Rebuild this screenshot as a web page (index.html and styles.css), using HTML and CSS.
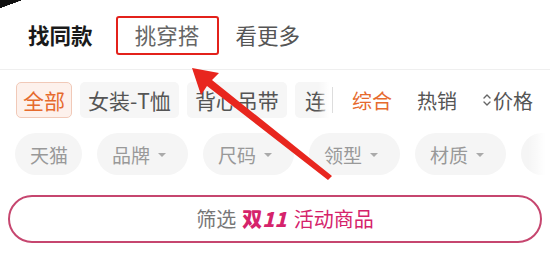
FILE: index.html
```html
<!DOCTYPE html>
<html lang="zh">
<head>
<meta charset="utf-8">
<link rel="stylesheet" href="styles.css">
</head>
<body>
<div class="page">
  <div class="corner"></div>
  <nav class="tabs">
    <span class="tab tab-active">找同款</span>
    <span class="tab tab-boxed">挑穿搭</span>
    <span class="tab">看更多</span>
  </nav>
  <div class="cats">
    <div class="cat-scroll">
      <span class="chip chip-on">全部</span>
      <span class="chip">女装-T恤</span>
      <span class="chip">背心吊带</span>
      <span class="chip chip-cut">连</span>
      <span class="fade"></span>
    </div>
    <span class="vdiv"></span>
    <div class="sorts">
      <span class="sort sort-on">综合</span>
      <span class="sort">热销</span>
      <span class="sort"><svg class="updown" viewBox="0 0 10 18" width="10" height="18"><path d="M2 7 L5 4 L8 7 M2 11 L5 14 L8 11" fill="none" stroke="#666" stroke-width="1.4" stroke-linecap="round" stroke-linejoin="round"/></svg>价格</span>
    </div>
  </div>
  <div class="filters">
    <span class="pill pill-plain">天猫</span>
    <span class="pill">品牌<i class="caret"></i></span>
    <span class="pill">尺码<i class="caret"></i></span>
    <span class="pill">领型<i class="caret"></i></span>
    <span class="pill">材质<i class="caret"></i></span>
    <span class="pill pill-empty"></span>
    <span class="fade fade-r"></span>
  </div>
  <div class="promo">
    <div class="promo-btn"><span class="gray">筛选</span><b class="d11">双<i>11</i></b><span class="hot">活动商品</span></div>
  </div>
  <svg class="arrow" width="550" height="262" viewBox="0 0 550 262">
    <polygon points="192,68 219,73 212,80 332,176 328,180 207,86 201,95" fill="#e8261e"/>
  </svg>
</div>
</body>
</html>
```
FILE: styles.css
```css
* { box-sizing: border-box; }
html, body { margin: 0; padding: 0; background: #fff; }
body {
  width: 550px; height: 262px; overflow: hidden;
  font-family: "Noto Sans CJK SC", "Noto Sans", sans-serif;
}
.page { position: relative; width: 550px; height: 262px; }
.corner {
  position: absolute; left: 0; top: 0; width: 22px; height: 10px;
  background: linear-gradient(160deg, #111 0 45%, transparent 46%);
}
.tabs {
  display: flex; align-items: center; height: 70px;
  padding-left: 28px; border-bottom: 1px solid #efefef;
}
.tab { font-size: 21.5px; color: #555; line-height: 1; }
.tab-active { color: #1a1a1a; font-weight: 700; margin-right: 23px; }
.tab-boxed {
  color: #666; border: 2px solid #e3211b; border-radius: 3px;
  width: 103px; height: 39px; margin: 1px 17px 0 0;
  display: flex; align-items: center; justify-content: center;
}
.cats { display: flex; align-items: center; height: 60px; padding-left: 16px; }
.cat-scroll {
  position: relative; display: flex; gap: 8px; width: 316px; overflow: hidden; flex: none;
}
.chip {
  flex: none; height: 36px; padding: 0 7px; border-radius: 5px; background: #f6f6f6;
  color: #555; font-size: 21px; line-height: 34px; white-space: nowrap; border: 1px solid transparent;
}
.chip-on { background: #fdf1ec; border-color: #f1c9b8; color: #e66a2d; padding: 0 6px; }
.chip-cut { width: 60px; padding-left: 9px; }
.fade {
  position: absolute; right: 0; top: 0; bottom: 0; width: 14px;
  background: linear-gradient(90deg, rgba(255,255,255,0), #fff 80%);
}
.vdiv { width: 1px; height: 26px; background: #ddd; flex: none; }
.sorts { display: flex; align-items: center; gap: 25px; margin-left: 19px; }
.sort { font-size: 20px; color: #555; display: flex; align-items: center; white-space: nowrap; }
.sort-on { color: #e66a2d; }
.updown { margin-right: 1px; }
.filters {
  position: relative; display: flex; gap: 15px; padding: 3px 0 0 15px; height: 63px;
  overflow: hidden; align-items: flex-start;
}
.pill {
  flex: none; height: 42px; display: flex; align-items: center; padding: 0 22px 0 15px;
  background: #f5f5f5; border-radius: 21px; color: #999; font-size: 19px; white-space: nowrap;
}
.pill-plain { padding: 0 14px 0 15px; }
.pill-empty { width: 80px; }
.caret {
  display: inline-block; width: 0; height: 0; margin-left: 8px; margin-top: 2px;
  border-left: 4px solid transparent; border-right: 4px solid transparent; border-top: 4px solid #aaa;
}
.fade-r { width: 22px; }
.promo { padding: 2px 8px 0 8px; }
.promo-btn {
  height: 48px; border: 2px solid #c6466f; border-radius: 24px;
  display: flex; align-items: center; justify-content: center; padding-left: 20px;
  font-size: 20px; line-height: 1;
}
.gray { color: #777; margin-right: 6px; }
.d11 { color: #d5236b; font-weight: 900; margin-right: 7px; }
.d11 i { font-style: italic; }
.hot { color: #d5236b; }
.arrow { position: absolute; left: 0; top: 0; pointer-events: none; }
```
